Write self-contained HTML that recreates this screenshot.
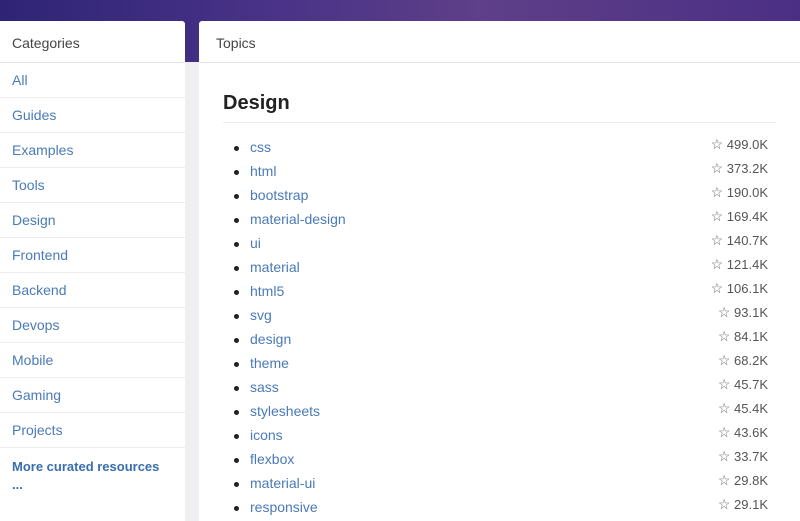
<!DOCTYPE html>
<html><head><style>
*{margin:0;padding:0;box-sizing:border-box}
body{width:800px;height:500px;overflow:hidden;background:#efeff1;font-family:"Liberation Sans",sans-serif;position:relative}
.top{position:absolute;left:0;top:0;width:800px;height:62px;background:linear-gradient(90deg,#2e2475 0%,#4a3388 35%,#5e3f88 60%,#4b2f85 100%)}
.left{position:absolute;left:0;top:21px;width:185px;height:500px;background:#fff;border-radius:0 3px 0 0}
.right{position:absolute;left:199px;top:21px;width:601px;height:500px;background:#fff;border-radius:3px 0 0 0}
.hd{height:42px;border-bottom:1px solid #e3e3e3;padding:14px 12px;font-size:14px;color:#444}
.right .hd{padding-left:17px}
.cat{height:35px;border-bottom:1px solid #ececec;padding:9px 12px;font-size:14px;color:#4a7ab8}
.more{padding:10px 12px;font-size:13px;color:#3a6eae;font-weight:bold;line-height:18px}
h1{position:absolute;left:24px;top:71px;font-size:20px;color:#222}
.hr{position:absolute;left:24px;top:101px;width:553px;height:1px;background:#ececec}
ul{position:absolute;left:24px;top:116px;width:553px;list-style:none}
li{height:24px;position:relative;font-size:14px;line-height:20px}
li:before{content:"";position:absolute;left:11px;top:9px;width:5px;height:5px;border-radius:50%;background:#222}
li a{position:absolute;left:27px;color:#4a7ab8;text-decoration:none}
li span{position:absolute;right:8px;top:-3px;font-size:13px;color:#555}
li span b{font-weight:normal;font-size:14px;color:#666}
</style></head><body>
<div class="top"></div>
<div class="left">
<div class="hd">Categories</div>
<div class="cat">All</div><div class="cat">Guides</div><div class="cat">Examples</div><div class="cat">Tools</div><div class="cat">Design</div><div class="cat">Frontend</div><div class="cat">Backend</div><div class="cat">Devops</div><div class="cat">Mobile</div><div class="cat">Gaming</div><div class="cat">Projects</div>
<div class="more">More curated resources<br>...</div>
</div>
<div class="right">
<div class="hd">Topics</div>
<h1>Design</h1><div class="hr"></div>
<ul>
<li><a>css</a><span><b>☆</b> 499.0K</span></li>
<li><a>html</a><span><b>☆</b> 373.2K</span></li>
<li><a>bootstrap</a><span><b>☆</b> 190.0K</span></li>
<li><a>material-design</a><span><b>☆</b> 169.4K</span></li>
<li><a>ui</a><span><b>☆</b> 140.7K</span></li>
<li><a>material</a><span><b>☆</b> 121.4K</span></li>
<li><a>html5</a><span><b>☆</b> 106.1K</span></li>
<li><a>svg</a><span><b>☆</b> 93.1K</span></li>
<li><a>design</a><span><b>☆</b> 84.1K</span></li>
<li><a>theme</a><span><b>☆</b> 68.2K</span></li>
<li><a>sass</a><span><b>☆</b> 45.7K</span></li>
<li><a>stylesheets</a><span><b>☆</b> 45.4K</span></li>
<li><a>icons</a><span><b>☆</b> 43.6K</span></li>
<li><a>flexbox</a><span><b>☆</b> 33.7K</span></li>
<li><a>material-ui</a><span><b>☆</b> 29.8K</span></li>
<li><a>responsive</a><span><b>☆</b> 29.1K</span></li>
</ul>
</div>
</body></html>
